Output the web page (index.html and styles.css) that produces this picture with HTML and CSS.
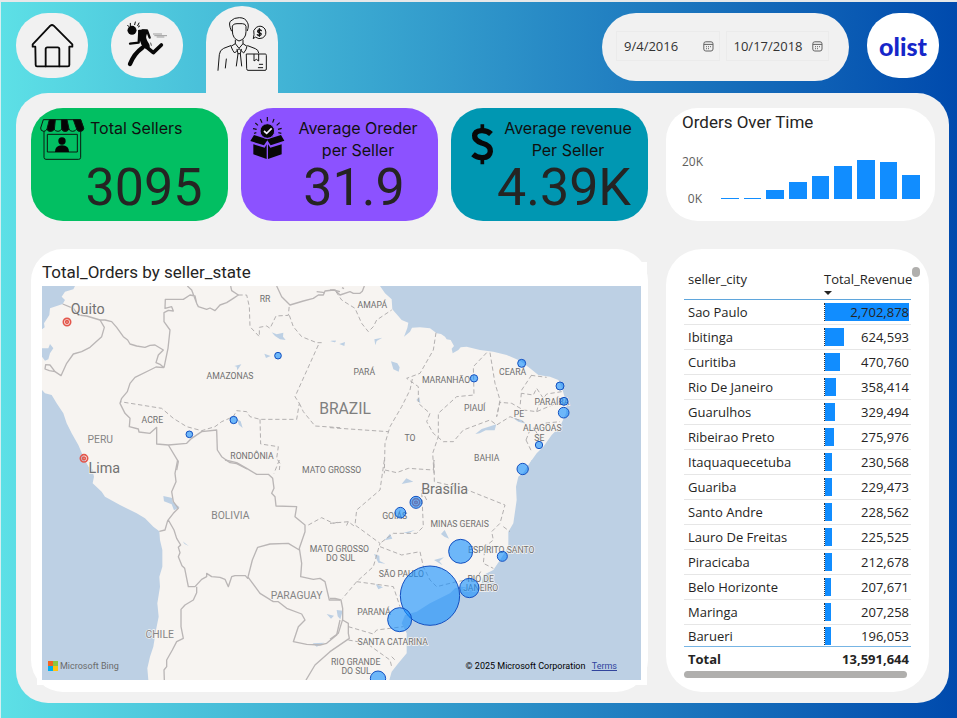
FILE: index.html
```html
<!DOCTYPE html>
<html lang="en">
<head>
<meta charset="utf-8">
<meta name="viewport" content="width=device-width, initial-scale=1">
<title>Olist Sellers Dashboard</title>
<link rel="stylesheet" href="styles.css">
</head>
<body>
<div class="page">
  <header class="topbar">
    <nav class="tabs">
      <a class="tab" href="#home" aria-label="Home">
        <svg viewBox="48 38 216 195" fill="none" stroke="#0a0a0a" stroke-width="5.5" stroke-linejoin="round" stroke-linecap="round">
          <path d="M106 139H98V132L151 76Q156 72 161 76L217 132V139H208V194Q208 198 204 198H111Q107 198 107 194Z"/>
          <path d="M137 198V146Q137 141 142 141H173Q178 141 178 146V198"/>
        </svg>
      </a>
      <a class="tab" href="#delivery" aria-label="Delivery">
        <svg viewBox="333 38 216 195">
          <circle cx="396" cy="90" r="13.5" fill="#080808"/>
          <path d="M414 90Q428 85 444 91L439 106Q436 114 447 130Q452 139 446 146L430 143Q417 124 417 98Z" fill="#080808"/>
          <g fill="none" stroke="#080808" stroke-linecap="round" stroke-linejoin="round">
            <path d="M418 92L416 127L390 130" stroke-width="7"/>
            <path d="M428 90H441L449 112" stroke-width="7"/>
            <path d="M438 139L460 157L484 134" stroke-width="11"/>
            <path d="M427 142Q402 160 390 191" stroke-width="13"/>
            <path d="M383 75l4 4M391 69v7M406 65l-2 8M417 68l-4 8M419 77l-4 3" stroke-width="3"/>
            <path d="M452 128l2 7" stroke-width="2"/>
          </g>
          <path d="M459 101h27M463 106h38M470 110h23" stroke="#8b8b8b" stroke-width="2.5"/>
        </svg>
      </a>
      <a class="tab tab-active" href="#sellers" aria-label="Sellers" aria-current="page">
        <svg viewBox="618 19 216 261" fill="none" stroke="#161616" stroke-width="3" stroke-linecap="round" stroke-linejoin="round">
          <path d="M694 93Q685 73 691 65Q703 53 718 54Q736 54 742 68Q748 77 742 93"/>
          <path d="M697 94V79Q701 71 711 72H727Q737 72 738 80V96Q738 118 717 124Q697 117 697 94Z"/>
          <path d="M706 121V132L717 146L729 132V121M706 132L693 140Q698 154 704 160L717 147L731 160Q739 151 741 140L729 132M711 149L714 162L709 199M724 149L721 162L725 199M714 162H721"/>
          <path d="M692 138L671 146Q659 151 658 165L654 212M679 178L676 205M743 138L766 147Q775 150 776 159"/>
          <path d="M740 163H796Q799 163 799 167V208Q799 212 795 212H744Q740 212 740 208ZM762 164V184L769 179L776 184V164M778 194H788M775 204H788"/>
          <path d="M760 116L762 105Q757 91 769 83Q784 74 795 88Q803 107 787 115Q777 120 767 113Z"/>
          <path d="M784 93Q780 89 775 91Q770 97 777 99Q787 102 782 106Q777 109 772 105M778 87V110" stroke-width="4"/>
        </svg>
      </a>
    </nav>
    <div class="topbar-right">
      <form class="date-range">
        <div class="date-field">
          <input type="text" value="9/4/2016" aria-label="Start date">
          <button type="button" aria-label="Choose start date">
            <svg viewBox="0 0 11 11" fill="none" stroke="#626262"><rect x=".8" y=".8" width="9.2" height="9.2" rx="2"/><path d="M1 3.4H10M3 5.7h1M5 5.7h1M7 5.7h1M3 7.7h1M5 7.7h1"/></svg>
          </button>
        </div>
        <div class="date-field">
          <input type="text" value="10/17/2018" aria-label="End date">
          <button type="button" aria-label="Choose end date">
            <svg viewBox="0 0 11 11" fill="none" stroke="#626262"><rect x=".8" y=".8" width="9.2" height="9.2" rx="2"/><path d="M1 3.4H10M3 5.7h1M5 5.7h1M7 5.7h1M3 7.7h1M5 7.7h1"/></svg>
          </button>
        </div>
      </form>
      <div class="brand">olist</div>
    </div>
  </header>

  <main class="panel">
    <section class="kpis">
      <article class="kpi kpi-green">
        <svg class="kpi-icon" viewBox="60 66 132 132" fill="none" stroke="#0b1a10" stroke-width="3">
          <path d="M72 108V187Q72 193 78 193H176Q182 193 182 187V108M82 118H172V171H82Z"/>
          <path d="M70 74H182L191 100Q191 108 181 109Q172 110 170 102Q166 109 158 109Q149 109 147 102Q143 109 136 109Q127 109 125 102Q121 109 114 109Q105 109 102 102Q98 109 91 109Q83 109 81 102Q78 109 71 109Q61 108 62 99Z" fill="#02bf62"/>
          <path d="M88 74H106L103 103Q99 109 91 109Q83 109 81 102ZM124 74H141L147 102Q143 109 136 109Q127 109 125 102ZM160 74H182L191 100Q190 109 181 109Q172 109 170 102Z" fill="#050505"/>
          <circle cx="126" cy="138" r="11" fill="#050505" stroke="none"/>
          <path d="M105 171Q105 151 126 151Q147 151 147 171Z" fill="#050505" stroke="none"/>
        </svg>
        <h2 class="kpi-label kpi-label-start">Total Sellers</h2>
        <p class="kpi-value">3095</p>
      </article>
      <article class="kpi kpi-purple">
        <svg class="kpi-icon" viewBox="690 66 132 132">
          <path d="M691 138L702 120L742 133L783 120L793 137L752 151L742 136L732 151Z" fill="#080808"/>
          <path d="M700 148L734 158L740 148V192L700 178ZM744 148L751 158L785 148V178L744 192Z" fill="#080808"/>
          <circle cx="742" cy="108" r="22" fill="#080808" stroke="#8c52ff" stroke-width="3"/>
          <path d="M732 108L740 115L755 100" fill="none" stroke="#f5efff" stroke-width="5"/>
          <path d="M742 66V79M721 72L726 83M762 72L758 83M706 84L714 91M779 83L770 91M699 101L710 103M785 100L774 103M702 115L709 113M784 115L775 113" stroke="#101010" stroke-width="3.5"/>
        </svg>
        <h2 class="kpi-label">Average Oreder per Seller</h2>
        <p class="kpi-value">31.9</p>
      </article>
      <article class="kpi kpi-teal">
        <svg class="kpi-icon" viewBox="362 66 132 132" fill="none" stroke="#080808" stroke-width="16">
          <path d="M429 88V106M429 190V208" stroke-width="11"/>
          <path d="M455 117Q444 106 426 107Q406 109 406 122Q405 136 427 144Q454 151 453 169Q451 187 430 188Q413 189 401 178"/>
        </svg>
        <h2 class="kpi-label">Average revenue Per Seller</h2>
        <p class="kpi-value">4.39K</p>
      </article>
    </section>

    <section class="orders">
      <h2 class="visual-title">Orders Over Time</h2>
      <div class="chart">
        <div class="axis"><span>20K</span><span>0K</span></div>
        <div class="bars">
          <i style="height:2%"></i><i style="height:2%"></i><i style="height:24%"></i><i style="height:44%"></i><i style="height:58%"></i><i style="height:84%"></i><i style="height:100%"></i><i style="height:95%"></i><i style="height:61%"></i>
        </div>
      </div>
    </section>

    <section class="map-card">
      <div class="map-visual">
        <h2 class="visual-title">Total_Orders by seller_state</h2>
        <div class="map">
          <svg viewBox="0 0 1797 1182" preserveAspectRatio="xMidYMid slice" role="img" aria-label="Orders by Brazilian state">
            <g class="water">
              <g transform="translate(-66 -138)">
                <path d="M66 138H165L160 148L135 155L125 170L135 180L128 192L90 205L88 225L72 250L74 262L66 268ZM66 325H85L90 312L100 325L90 340L85 358L75 362L66 350ZM66 450L75 460L95 465L110 490L130 520L140 550L155 580L175 615L190 650L205 680L216 700H66Z"/>
                <path d="M755 277L770 283L790 278L789 290L797 300L780 298L765 288ZM733 341L752 348L738 354ZM643 378L664 373L652 391L650 380ZM652 538L662 544L668 564L656 554ZM930 303L948 302L944 307Z"/>
              </g>
              <g transform="translate(864 -138)">
                <path d="M150 138L165 160L185 178L187 208L215 240L235 248L232 264L222 290L240 275L246 263L270 262L300 265L320 280L333 282L345 290L350 298L362 300L372 318L365 326L368 340L385 330L392 322L410 320L450 330L490 335L530 345L570 362L600 385L625 405L660 410L685 420L695 440L702 465L710 490L708 520L690 560L665 585L640 620L620 640L595 675L580 700H933V138Z"/>
                <path d="M3 302H18L15 307ZM28 312L45 306L43 318ZM133 298L157 293L140 303L136 316ZM183 364L202 370L209 382L206 395L190 388ZM259 480L268 472L271 490ZM436 582L455 567L483 558L499 553L494 571L467 571L449 580ZM548 533L575 540L588 551L565 545Z"/>
              </g>
              <g transform="translate(-66 522)">
                <path d="M66 0H193L205 20L217 28L222 50L218 70L245 95L255 110L300 135L350 160L375 175L400 200L418 214L420 240L427 270L427 320L418 350L420 380L412 430L416 470L408 510L400 560L390 590L382 625L385 660H66Z"/>
                <path d="M430 108L457 114L458 126L479 142L462 151L455 133L432 124ZM488 244L506 258L494 252ZM920 462L942 467L933 476ZM878 550L913 548L890 560Z"/>
              </g>
              <g transform="translate(864 522)">
                <path d="M605 0L590 30L565 50L558 80L560 120L550 190L535 215L535 260L510 300L490 330L460 345L455 370L430 385L395 380L375 385L360 400L300 430L260 455L225 465L215 490L230 520L230 580L205 610L185 635L178 660H933V0Z"/>
                <path d="M215 72L229 55L250 65L230 69ZM164 241L180 221L187 236ZM220 218L255 210L235 220ZM333 222L344 210L357 236L343 230ZM312 300L342 292L328 304L338 316ZM132 282L148 287L149 303L166 311L145 308ZM137 372L159 382L145 388ZM20 450L38 452L31 478L23 469Z"/>
              </g>
            </g>
            <g class="border">
              <path transform="translate(-66 -138)" d="M128 192L160 205L175 225L200 228L240 240L255 240L275 245L290 262L310 290L323 300L330 312L350 318L375 322L390 316L405 315L430 330L415 345L408 368L420 373L432 383M240 240L253 262L245 290L210 322L185 335L160 342L140 370L123 407L105 395L90 375L77 374L75 387L88 392L105 395M432 383L444 325L450 270L432 245L432 218L445 211L460 213L455 200L435 205L436 178H490L510 165L525 168L530 190L535 200L560 208L570 204L585 212L600 195L620 188L640 175L655 165L635 152L632 138M502 138L515 150L530 190M432 383L408 381L390 390L345 412L330 430L322 455L305 475L300 490L315 520L330 535L328 560L355 567L357 576L390 580L410 562V612L445 615L500 610L515 595L545 575L590 570L592 630L605 650L630 668L650 671L681 687M445 615L475 665L470 690M770 138L785 170L810 195L850 183L880 175L895 165L910 165L915 153L940 150L960 155"/>
              <path transform="translate(864 -138)" d="M0 150L15 150L30 165L60 155L70 160L90 160L97 154L103 138M-40 155L-15 158M36 143L42 146"/>
              <path transform="translate(-66 522)" d="M473 0L465 40L468 65L455 95L460 125L475 145L460 160L443 182L435 210L418 214M445 180L462 210L470 235L482 255L475 262L480 278L475 290L486 317L494 325L505 380H525L545 358L560 350V340L575 350L600 352L615 358L625 380L635 350L645 347L676 347L683 355L697 300L713 262L750 252L805 250L838 270M615 0L650 8L680 25L710 43L745 43L758 55L762 85L755 100L765 110L768 138L830 140L825 170L845 187L855 195V215L838 265L845 310L842 350L880 358L900 355L915 365L928 420L960 420M530 380V398L520 420L495 435L483 448V500L490 535L470 545L457 570L440 600V620L432 630L433 660M683 350L720 400L760 425L775 425L800 445L845 462L855 480L835 500L820 545L860 553L900 555L920 550L950 525L960 480"/>
              <path transform="translate(864 522)" d="M0 415H15L33 420L38 445L38 478L25 520L0 538M38 480L55 490V520L58 535L0 575L-45 615L-72 660"/>
            </g>
            <g class="border state">
              <path transform="translate(-66 -138)" d="M655 165L680 165L688 200L690 260L718 290V262L740 258L750 265L768 228L805 226L808 195M808 226L820 260L845 290L890 308L905 308M895 315L825 470L838 490L830 538H720L690 530L680 515L650 512L640 530L605 545L585 560L545 572L500 560L460 535L425 505L300 485M838 490L850 515L885 558L960 563M720 538L722 612L775 620L770 655L780 670L778 690"/>
              <path transform="translate(864 -138)" d="M18 155L35 180L75 205L95 250L115 275L130 260L140 240L185 210M318 278L310 330L270 400L230 415L265 440V490L300 520L290 545L310 580L340 605L370 605L400 570L440 555L480 540L500 555L540 530L580 545M247 417L240 450L215 500L180 560L165 610L163 700M0 563L175 575M470 338L430 380L432 465L380 470L325 520V590L308 640L312 700M480 338L495 430L510 480L500 530L510 487L545 490L580 510L620 515L690 485M605 405L575 450L570 500M603 406L650 412M695 455L650 462L640 475L620 445L610 465L575 460M620 515L625 495L640 490M588 600L600 570L640 550L690 545M588 600L605 635M615 570L630 595"/>
              <path transform="translate(-66 522)" d="M778 0L762 40M865 195L905 173L940 190L960 185"/>
              <path transform="translate(864 522)" d="M163 0L150 90L80 150L75 195L150 250L130 320L80 365L38 415M165 30L200 38L235 25L310 30L312 0L313 65L400 85L450 105L525 135L510 190L485 215L490 240L465 260L460 310L490 325M520 200L540 215M0 190L55 185L75 200M55 185L48 200M150 260L215 285L270 275L280 320L300 360L320 380L380 365L440 355L455 330M290 120L275 90L280 200L260 220L190 220L150 250M80 365L190 380L210 440M55 500L130 522L140 510L220 500M55 540L110 550L180 600L185 620M185 590L195 600"/>
            </g>
            <g class="capital">
              <circle cx="75" cy="108" r="11"/><circle cx="75" cy="108" r="4"/>
              <circle cx="126" cy="517" r="11"/><circle cx="126" cy="517" r="4"/>
              <circle cx="1122" cy="649" r="11"/><circle cx="1122" cy="649" r="4"/>
            </g>
            <g class="labels">
              <text x="669" y="48">RR</text><text x="991" y="67">AMAPÁ</text><text x="564" y="279">AMAZONAS</text><text x="967" y="267">PARÁ</text><text x="1212" y="291">MARANHÃO</text><text x="1412" y="267">CEARÁ</text><text x="1298" y="375">PIAUÍ</text><text x="1431" y="392">PE</text><text x="1530" y="356">PARAÍBA</text><text x="1501" y="435">ALAGOAS</text><text x="1492" y="466">SE</text><text x="331" y="411">ACRE</text><text x="1104" y="464">TO</text><text x="1334" y="524">BAHIA</text><text x="630" y="519">RONDÔNIA</text><text x="869" y="560">MATO GROSSO</text><text x="1058" y="700">GOIÁS</text><text x="1253" y="723">MINAS GERAIS</text><text x="1378" y="800">ESPÍRITO SANTO</text><text x="892" y="798">MATO GROSSO</text><text x="896" y="825">DO SUL</text><text x="1078" y="872">SÃO PAULO</text><text x="1316" y="887">RIO DE</text><text x="1316" y="916">JANEIRO</text><text x="996" y="988">PARANÁ</text><text x="1052" y="1077">SANTA CATARINA</text><text x="941" y="1137">RIO GRANDE</text><text x="942" y="1163">DO SUL</text>
              <g class="country"><text x="175" y="471">PERU</text><text x="565" y="699">BOLIVIA</text><text x="764" y="940">PARAGUAY</text><text x="353" y="1056">CHILE</text></g>
              <text class="nation" x="909" y="385">BRAZIL</text>
              <g class="city"><text x="137" y="85">Quito</text><text x="187" y="561">Lima</text><text x="1208" y="625">Brasília</text></g>
            </g>
            <g class="bubbles">
              <g transform="translate(-66 -138)"><circle cx="774" cy="347" r="10"/><circle cx="641" cy="540" r="11"/><circle cx="508" cy="583" r="10"/></g>
              <g transform="translate(864 -138)"><circle cx="432" cy="415" r="11"/><circle cx="575" cy="370" r="12"/><circle cx="690" cy="438" r="12"/><circle cx="702" cy="484" r="12"/><circle cx="701" cy="518" r="16"/><circle cx="627" cy="615" r="11"/></g>
              <g transform="translate(864 522)"><circle cx="578" cy="27" r="17"/><circle cx="258" cy="127" r="18"/><circle cx="211" cy="158" r="16"/><circle cx="392" cy="274" r="36"/><circle cx="517" cy="289" r="15"/><circle cx="300" cy="407" r="89"/><circle cx="418" cy="384" r="29"/><circle cx="209" cy="479" r="36"/><circle cx="144" cy="656" r="23"/></g>
            </g>
          </svg>
          <div class="map-footer">
            <span class="bing"><svg viewBox="0 0 10 10"><path fill="#f26522" d="M0 0h5v5H0z"/><path fill="#8dc63f" d="M5 0h5v5H5z"/><path fill="#00aeef" d="M0 5h5v5H0z"/><path fill="#ffc20e" d="M5 5h5v5H5z"/></svg>Microsoft Bing</span>
            <span class="copyright">© 2025 Microsoft Corporation <a href="#terms">Terms</a></span>
          </div>
        </div>
      </div>
    </section>

    <section class="table-card">
      <div class="table-scroll">
        <table>
          <thead><tr><th scope="col">seller_city</th><th scope="col" class="revenue" aria-sort="descending"><button type="button">Total_Revenue</button></th></tr></thead>
          <tbody>
            <tr><td>Sao Paulo</td><td class="revenue"><div class="databar"><i style="width:100%"></i><span>2,702,878</span></div></td></tr>
            <tr><td>Ibitinga</td><td class="revenue"><div class="databar"><i style="width:23.1%"></i><span>624,593</span></div></td></tr>
            <tr><td>Curitiba</td><td class="revenue"><div class="databar"><i style="width:17.4%"></i><span>470,760</span></div></td></tr>
            <tr><td>Rio De Janeiro</td><td class="revenue"><div class="databar"><i style="width:13.3%"></i><span>358,414</span></div></td></tr>
            <tr><td>Guarulhos</td><td class="revenue"><div class="databar"><i style="width:12.2%"></i><span>329,494</span></div></td></tr>
            <tr><td>Ribeirao Preto</td><td class="revenue"><div class="databar"><i style="width:10.2%"></i><span>275,976</span></div></td></tr>
            <tr><td>Itaquaquecetuba</td><td class="revenue"><div class="databar"><i style="width:8.5%"></i><span>230,568</span></div></td></tr>
            <tr><td>Guariba</td><td class="revenue"><div class="databar"><i style="width:8.5%"></i><span>229,473</span></div></td></tr>
            <tr><td>Santo Andre</td><td class="revenue"><div class="databar"><i style="width:8.5%"></i><span>228,562</span></div></td></tr>
            <tr><td>Lauro De Freitas</td><td class="revenue"><div class="databar"><i style="width:8.3%"></i><span>225,525</span></div></td></tr>
            <tr><td>Piracicaba</td><td class="revenue"><div class="databar"><i style="width:7.9%"></i><span>212,678</span></div></td></tr>
            <tr><td>Belo Horizonte</td><td class="revenue"><div class="databar"><i style="width:7.7%"></i><span>207,671</span></div></td></tr>
            <tr><td>Maringa</td><td class="revenue"><div class="databar"><i style="width:7.7%"></i><span>207,258</span></div></td></tr>
            <tr class="last"><td>Barueri</td><td class="revenue"><div class="databar"><i style="width:7.3%"></i><span>196,053</span></div></td></tr>
          </tbody>
          <tfoot><tr><th scope="row">Total</th><td class="revenue">13,591,644</td></tr></tfoot>
        </table>
        <div class="scroll-x"></div>
      </div>
      <div class="scroll-y"></div>
    </section>
  </main>
</div>
</body>
</html>
```
FILE: styles.css
```css
* {
  box-sizing: border-box;
}

body {
  margin: 0;
  font-family: "Open Sans", "Noto Sans", sans-serif;
  font-size: 13px;
  color: #252423;
}

h2,
p {
  margin: 0;
}

button {
  padding: 0;
  border: 0;
  background: none;
  color: inherit;
  font: inherit;
}

svg {
  display: block;
}

.page {
  display: flex;
  flex-direction: column;
  min-height: 100vh;
  padding: 0 8px 15px 15px;
  border-top: 2px solid #e6e8e9;
  border-left: 1px solid #d5eff1;
  background: linear-gradient(90deg, #5de0e6, #004aad);
}

/* Top bar */
.topbar {
  display: flex;
  justify-content: space-between;
  height: 91px;
  padding-right: 10px;
}

.tabs {
  display: flex;
  gap: 23px;
  align-items: flex-start;
}

.tab {
  width: 72px;
  height: 65px;
  margin-top: 11px;
  border-radius: 32px;
  background: #f1f1f1;
}

.tab svg {
  width: 100%;
  height: 100%;
}

.tab-active {
  height: 87px;
  margin-top: 4px;
  border-radius: 36px 36px 0 0;
}

.topbar-right {
  display: flex;
  gap: 18px;
  align-items: flex-start;
  padding-top: 11px;
}

.date-range {
  display: flex;
  gap: 6px;
  width: 247px;
  height: 68px;
  padding: 18px 20px 20px 14px;
  border-radius: 34px;
  background: #f1f1f1;
}

.date-field {
  display: flex;
  flex: 1;
  align-items: center;
  gap: 4px;
  min-width: 0;
  padding: 0 5px 0 7px;
  border: 1px solid #ebebeb;
}

.date-field input {
  flex: 1;
  min-width: 0;
  padding: 0;
  border: 0;
  background: none;
  color: #333;
  font-family: "Open Sans", sans-serif;
  font-size: 13px;
}

.date-field svg {
  width: 11px;
  height: 11px;
}

.brand {
  width: 72px;
  height: 65px;
  border-radius: 32px;
  background: #fff;
  color: #1627c9;
  font-family: Lato, sans-serif;
  font-size: 25px;
  font-weight: 900;
  line-height: 66px;
  text-align: center;
}

/* Main panel */
.panel {
  display: grid;
  flex: 1;
  grid-template-columns: minmax(0, 617fr) minmax(0, 269fr);
  grid-template-rows: 113px 1fr;
  gap: 28px 18px;
  padding: 15px 14px 11px 15px;
  border-radius: 32px;
  background: #f1f1f1;
}

.kpis {
  display: grid;
  grid-template-columns: repeat(3, minmax(0, 1fr));
  gap: 13px;
}

.kpi {
  display: grid;
  grid-template-columns: 44px 1fr;
  grid-template-rows: 44px 54px;
  padding: 9px 12px 6px 9px;
  border-radius: 32px;
}

.kpi-green {
  background: #02bf62;
}

.kpi-purple {
  background: #8c52ff;
}

.kpi-teal {
  background: #0097b2;
}

.kpi-icon {
  width: 44px;
  height: 44px;
  overflow: visible;
}

.kpi-label {
  padding: 0 4px 0 0;
  color: #101010;
  font-family: Inter, sans-serif;
  font-size: 16px;
  font-weight: 400;
  line-height: 22px;
  text-align: center;
}

.kpi-label-start {
  padding: 0 0 0 6px;
  text-align: left;
}

.kpi-value {
  grid-column: 1 / -1;
  padding-left: 32px;
  font-family: Roboto, sans-serif;
  font-size: 52px;
  line-height: 54px;
  text-align: center;
}

.visual-title {
  font-family: Roboto, sans-serif;
  font-size: 17px;
  font-weight: 400;
  line-height: 20px;
}

/* Orders over time */
.orders {
  padding: 4px 15px 12px 16px;
  border-radius: 32px;
  background: #fff;
}

.chart {
  display: flex;
  gap: 19px;
  padding-top: 21px;
}

.axis {
  display: flex;
  flex-direction: column;
  justify-content: space-between;
  width: 20px;
  height: 55px;
  color: #605e5c;
  font-size: 12px;
  line-height: 18px;
  text-align: right;
}

.bars {
  display: flex;
  flex: 1;
  gap: 5px;
  align-items: flex-end;
  height: 39px;
  margin-top: 7px;
}

.bars i {
  flex: 1;
  min-height: 1px;
  background: #118dff;
}

/* Map */
.map-card {
  display: flex;
  padding: 13px 1px 7px 6px;
  border-radius: 32px;
  background: #fff;
}

.map-visual {
  display: flex;
  flex: 1;
  flex-direction: column;
  gap: 4px;
  min-width: 0;
  padding: 0 6px 5px 5px;
  background: #fff;
}

.map {
  position: relative;
  flex: 1;
  min-height: 300px;
  overflow: hidden;
  background: #f7f4f1;
}

.map > svg {
  position: absolute;
  width: 100%;
  height: 100%;
}

.water {
  fill: #bdd0e4;
}

.border {
  fill: none;
  stroke: #bab6b6;
  stroke-width: 4;
  stroke-linejoin: round;
}

.state {
  stroke: #b3b0b0;
  stroke-width: 3;
  stroke-dasharray: 13 8;
}

.capital {
  fill: none;
  stroke: #e4574c;
  stroke-width: 5;
}

.labels {
  fill: #707070;
  stroke: #f7f4f1;
  stroke-width: 4;
  paint-order: stroke;
  font-family: Roboto, sans-serif;
  font-size: 26px;
  text-anchor: middle;
}

.country {
  fill: #858585;
  font-size: 31px;
}

.nation {
  fill: #7f7f7f;
  font-size: 47px;
}

.city {
  fill: #727272;
  font-size: 43px;
}

.bubbles {
  fill: #118dff;
  fill-opacity: 0.6;
  stroke: #1450c0;
  stroke-width: 3;
}

.map-footer {
  position: absolute;
  right: 24px;
  bottom: 4px;
  left: 6px;
  display: flex;
  justify-content: space-between;
  font-family: Roboto, sans-serif;
  font-size: 9px;
  line-height: 16px;
}

.bing {
  display: flex;
  gap: 2px;
  align-items: center;
  padding-bottom: 2px;
  color: #6b6b6b;
}

.bing svg {
  width: 10px;
  height: 10px;
}

.copyright {
  color: #000;
}

.copyright a {
  margin-left: 4px;
  color: #31449d;
}

/* Revenue table */
.table-card {
  display: flex;
  gap: 1px;
  margin-right: 6px;
  padding: 18px 9px 13px 18px;
  border-radius: 36px;
  background: #fff;
}

.table-scroll {
  flex: 1;
  min-width: 0;
}

table {
  width: 100%;
  border-collapse: collapse;
  table-layout: fixed;
}

th {
  padding: 0 0 0 4px;
  font-weight: 400;
  text-align: left;
}

thead th {
  height: 32px;
  border-bottom: 1px solid #5fa6dc;
  line-height: 24px;
  vertical-align: top;
}

th.revenue {
  padding: 0;
}

.revenue {
  width: 87px;
}

thead button {
  white-space: nowrap;
}

thead button::after {
  display: block;
  width: 0;
  border: 4px solid transparent;
  border-top-color: #252423;
  border-bottom: 0;
  content: "";
}

tbody td {
  height: 25px;
  padding: 0 0 0 4px;
  border-bottom: 1px solid #e6e6e6;
  line-height: 18px;
}

tbody .revenue {
  padding: 0 2px 0 0;
}

.databar {
  display: grid;
  align-items: center;
  border-left: 1px dotted #333;
}

.databar i,
.databar span {
  grid-area: 1 / 1;
}

.databar i {
  height: 18px;
  background: #118dff;
}

.databar span {
  text-align: right;
}

.last td {
  height: 22px;
  padding-top: 2px;
  border-bottom-color: #77b5e4;
}

tfoot th,
tfoot td {
  height: 25px;
  font-weight: 700;
}

tfoot .revenue {
  padding: 0 2px 0 0;
  text-align: right;
}

.scroll-x {
  height: 7px;
  margin-right: 4px;
  border-radius: 4px;
  background: #b0afad;
}

.scroll-y {
  width: 8px;
  height: 10px;
  border-radius: 4px;
  background: #b0afad;
}
```
